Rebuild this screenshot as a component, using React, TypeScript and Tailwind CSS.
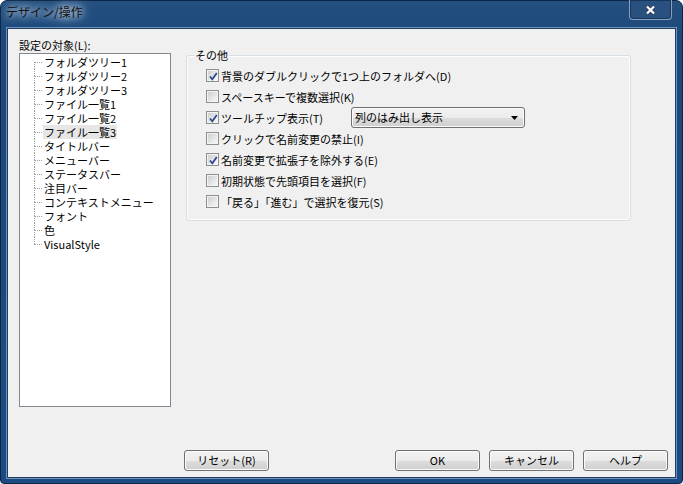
import React from "react"

const treeItems = [
  "フォルダツリー1",
  "フォルダツリー2",
  "フォルダツリー3",
  "ファイル一覧1",
  "ファイル一覧2",
  "ファイル一覧3",
  "タイトルバー",
  "メニューバー",
  "ステータスバー",
  "注目バー",
  "コンテキストメニュー",
  "フォント",
  "色",
  "VisualStyle",
]

const options = [
  { label: "背景のダブルクリックで1つ上のフォルダへ(D)", checked: true },
  { label: "スペースキーで複数選択(K)", checked: false },
  { label: "ツールチップ表示(T)", checked: true, combo: "列のはみ出し表示" },
  { label: "クリックで名前変更の禁止(I)", checked: false },
  { label: "名前変更で拡張子を除外する(E)", checked: true },
  { label: "初期状態で先頭項目を選択(F)", checked: false },
  { label: "「戻る」「進む」で選択を復元(S)", checked: false },
]

function Checkbox({ checked }: { checked: boolean }) {
  return (
    <div className="h-[13px] w-[13px] shrink-0 border border-[#8e8f8f] bg-[#f4f4f4] p-[1px]">
      <div className="h-full w-full bg-[linear-gradient(135deg,#cfcfcf,#f7f7f7)]">
        {checked && (
          <svg width="11" height="11" viewBox="0 0 11 11">
            <path d="M2 5.5 L4.3 8.3 L8.8 2" fill="none" stroke="#2a4a92" strokeWidth="1.8" />
          </svg>
        )}
      </div>
    </div>
  )
}

function Button({ children, className = "" }: { children: React.ReactNode; className?: string }) {
  return (
    <button
      type="button"
      className={`h-[21px] w-[85px] rounded-[3px] border border-[#707070] bg-[linear-gradient(#f2f2f2,#ebebeb_50%,#dddddd_50%,#cfcfcf)] text-[11px] leading-none text-black shadow-[inset_0_0_0_1px_#fbfbfb] ${className}`}
    >
      {children}
    </button>
  )
}

export default function App() {
  return (
    <div className="flex h-[484px] w-[683px] flex-col rounded-t-[7px] rounded-b-[4px] border border-[#0d2645] bg-[linear-gradient(#24507f,#1b477b_40px,#1c4b83)] font-['Noto_Sans_CJK_JP','Noto_Sans',sans-serif] text-black">
      {/* title bar */}
      <div className="flex h-[27px] shrink-0 items-start justify-between">
        <div className="pl-[5px] pt-[3px] text-[12px] leading-[16px] text-[#111] [text-shadow:0_0_6px_#c9d8ea,0_0_10px_#c9d8ea,0_0_14px_#9fb8d6]">
          デザイン/操作
        </div>
        <div className="mr-[10px] mt-[-1px] flex h-[20px] w-[43px] items-center justify-center rounded-b-[4px] border border-t-0 border-[#8aa3c2] bg-[#2a5080] shadow-[inset_0_0_0_1px_#16355c]">
          <svg width="11" height="10" viewBox="0 0 11 10">
            <path d="M2 1.5 L9 8.5 M9 1.5 L2 8.5" stroke="#2b3a4f" strokeWidth="3.6" />
            <path d="M2 1.5 L9 8.5 M9 1.5 L2 8.5" stroke="#ffffff" strokeWidth="2.2" />
          </svg>
        </div>
      </div>

      {/* client area */}
      <div className="mx-[6px] mb-[5px] flex flex-1 flex-col border border-[#203d62] bg-[#f0f0f0] shadow-[0_0_0_1px_#6f92bb]">
        <div className="flex pl-[11px] pt-[8px]">
          {/* left column */}
          <div className="w-[152px]">
            <div className="h-[16px] text-[11px] leading-[16px]">設定の対象(L):</div>
            <div className="h-[354px] border border-[#828790] bg-white pl-[14px] pt-[1px]">
              {treeItems.map((item, i) => (
                <div key={item} className="flex h-[14px]">
                  <div className="flex w-[9px] flex-col">
                    <div className={`h-[7px] w-[8px] ${i > 0 ? "border-l border-dotted border-[#a0a0a0]" : ""}`} />
                    <div
                      className={`h-[7px] w-[8px] border-t border-dotted border-[#a0a0a0] ${
                        i < treeItems.length - 1 ? "border-l" : ""
                      }`}
                    />
                  </div>
                  <div
                    className={`px-[1px] text-[11px] leading-[14px] ${i === 5 ? "bg-[#e6e6e6]" : ""}`}
                  >
                    {item}
                  </div>
                </div>
              ))}
            </div>
          </div>

          {/* right column */}
          <div className="ml-[15px] pt-[12px]">
            <fieldset className="w-[445px] rounded-[3px] border border-[#d5dfe5] p-0 shadow-[inset_0_0_0_1px_#fdfdfd]">
              <legend className="ml-[7px] px-[1px] text-[11px] leading-[12px]">その他</legend>
              <div className="pb-[8px] pl-[19px] pt-[4px]">
                {options.map((o) => (
                  <div key={o.label} className="flex h-[21px] items-center">
                    <div className={`flex items-center gap-[2px] ${o.combo ? "w-[145px]" : ""}`}>
                      <Checkbox checked={o.checked} />
                      <span className="text-[11px] leading-[14px]">{o.label}</span>
                    </div>
                    {o.combo && (
                      <div className="flex h-[21px] w-[174px] items-center justify-between rounded-[3px] border border-[#707070] bg-[linear-gradient(#f2f2f2,#ebebeb_50%,#dddddd_50%,#cfcfcf)] pl-[3px] pr-[6px] shadow-[inset_0_0_0_1px_#fbfbfb]">
                        <span className="text-[11px] leading-none">{o.combo}</span>
                        <svg width="7" height="4" viewBox="0 0 7 4">
                          <path d="M0 0 H7 L3.5 4 Z" fill="#000" />
                        </svg>
                      </div>
                    )}
                  </div>
                ))}
              </div>
            </fieldset>
          </div>
        </div>

        {/* buttons */}
        <div className="mt-auto flex pb-[6px] pr-[7px]">
          <Button className="ml-[176px]">リセット(R)</Button>
          <div className="ml-auto flex gap-[9px]">
            <Button>OK</Button>
            <Button>キャンセル</Button>
            <Button>ヘルプ</Button>
          </div>
        </div>
      </div>
    </div>
  )
}
